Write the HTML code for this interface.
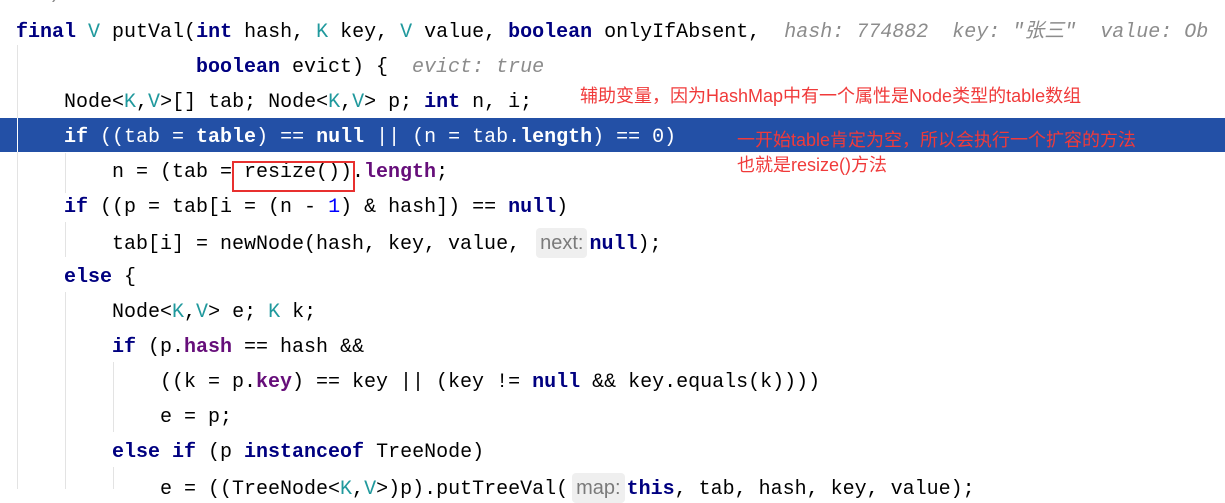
<!DOCTYPE html>
<html><head><meta charset="utf-8"><style>
body{margin:0;width:1225px;height:489px;background:#fff;position:relative;overflow:hidden;font-family:"Liberation Mono","Noto Sans CJK SC",monospace;font-size:20px;color:#000}
.l{position:absolute;white-space:pre;height:26px;line-height:26px}
.k{color:#000080;font-weight:bold}
.t{color:#20999d}
.f{color:#660e7a;font-weight:bold}
.n{color:#0000ff}
.h{color:#8c8c8c;font-style:italic}
.hl .k,.hl .f,.hl{color:#fff}
.hb{display:inline-block;background:#efefef;color:#7a7a7a;font-family:"Liberation Sans",sans-serif;font-size:20px;border-radius:4px;padding:2px 4px;line-height:26px;margin:-2px 2px -2px 4px}
.g{position:absolute;width:1px;background:#e3e3e3}
.a{position:absolute;color:#f03a3a;font-family:"Liberation Sans","Noto Sans CJK SC",sans-serif;font-size:18px;white-space:nowrap;line-height:22px}
</style></head><body>
<div class="l h" style="left:16px;top:-15px;color:#8c8c8c">  */</div>
<div class="g" style="left:17px;top:45px;height:444px"></div>
<div class="g" style="left:65px;top:153px;height:40px"></div>
<div class="g" style="left:65px;top:222px;height:35px"></div>
<div class="g" style="left:65px;top:292px;height:197px"></div>
<div class="g" style="left:113px;top:362px;height:70px"></div>
<div class="g" style="left:113px;top:467px;height:22px"></div>
<div style="position:absolute;left:0;top:118px;width:1225px;height:34px;background:#2350a6"></div>
<div class="g" style="left:17px;top:118px;height:34px;background:#fff"></div>

<div class="l" style="left:16px;top:20px"><span class="k">final</span> <span class="t">V</span> putVal(<span class="k">int</span> hash, <span class="t">K</span> key, <span class="t">V</span> value, <span class="k">boolean</span> onlyIfAbsent,  <span class="h">hash: 774882  key: "张三"  value: Ob</span></div>
<div class="l" style="left:196px;top:55px"><span class="k">boolean</span> evict) {  <span class="h">evict: true</span></div>
<div class="l" style="left:64px;top:90px">Node&lt;<span class="t">K</span>,<span class="t">V</span>&gt;[] tab; Node&lt;<span class="t">K</span>,<span class="t">V</span>&gt; p; <span class="k">int</span> n, i;</div>
<div class="l hl" style="left:64px;top:125px"><span class="k">if</span> ((tab = <span class="f">table</span>) == <span class="k">null</span> || (n = tab.<span class="f">length</span>) == 0)</div>
<div class="l" style="left:112px;top:160px">n = (tab = resize()).<span class="f">length</span>;</div>
<div style="position:absolute;left:232px;top:161px;width:119px;height:27px;border:2px solid #e8302f"></div>
<div class="l" style="left:64px;top:195px"><span class="k">if</span> ((p = tab[i = (n - <span class="n">1</span>) &amp; hash]) == <span class="k">null</span>)</div>
<div class="l" style="left:112px;top:230px">tab[i] = newNode(hash, key, value, <span class="hb">next:</span><span class="k">null</span>);</div>
<div class="l" style="left:64px;top:265px"><span class="k">else</span> {</div>
<div class="l" style="left:112px;top:300px">Node&lt;<span class="t">K</span>,<span class="t">V</span>&gt; e; <span class="t">K</span> k;</div>
<div class="l" style="left:112px;top:335px"><span class="k">if</span> (p.<span class="f">hash</span> == hash &amp;&amp;</div>
<div class="l" style="left:160px;top:370px">((k = p.<span class="f">key</span>) == key || (key != <span class="k">null</span> &amp;&amp; key.equals(k))))</div>
<div class="l" style="left:160px;top:405px">e = p;</div>
<div class="l" style="left:112px;top:440px"><span class="k">else if</span> (p <span class="k">instanceof</span> TreeNode)</div>
<div class="l" style="left:160px;top:475px">e = ((TreeNode&lt;<span class="t">K</span>,<span class="t">V</span>&gt;)p).putTreeVal(<span class="hb">map:</span><span class="k">this</span>, tab, hash, key, value);</div>

<div class="a" style="left:580px;top:85px">辅助变量，因为HashMap中有一个属性是Node类型的table数组</div>
<div class="a" style="left:737px;top:129px">一开始table肯定为空，所以会执行一个扩容的方法</div>
<div class="a" style="left:737px;top:154px">也就是resize()方法</div>
</body></html>
